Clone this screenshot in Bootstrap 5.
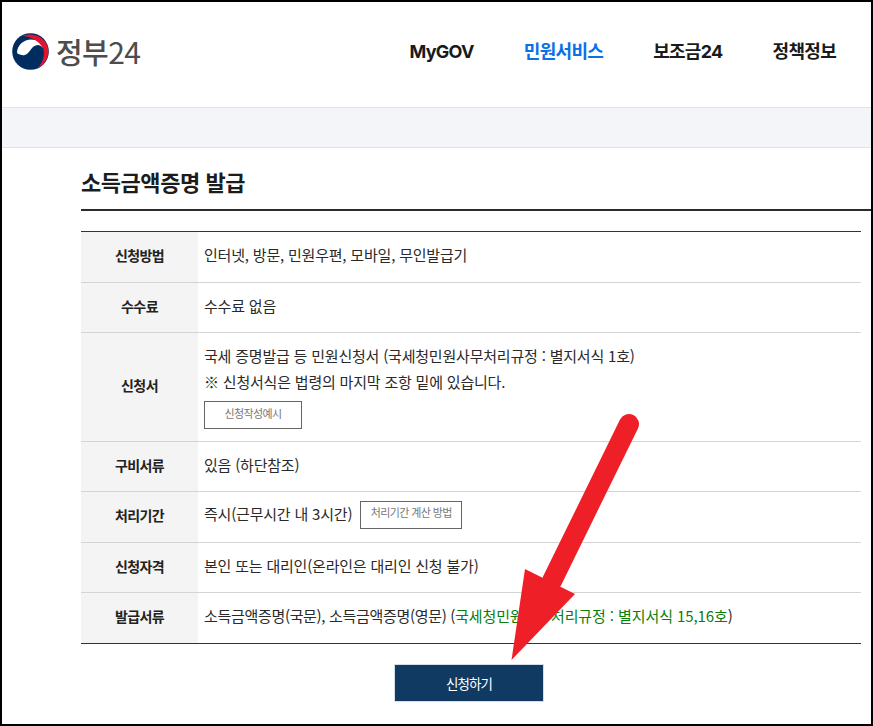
<!DOCTYPE html>
<html lang="ko">
<head>
<meta charset="utf-8">
<title>소득금액증명 발급</title>
<link rel="stylesheet" href="https://cdn.jsdelivr.net/npm/bootstrap@5.3.0/dist/css/bootstrap.min.css">
<style>
html,body{height:100%;overflow:hidden}
body{background:#fff;color:#222;font-family:"Noto Sans CJK KR","Noto Sans",sans-serif;letter-spacing:-.3px}
.frame{position:relative;height:726px;border:2px solid #000;overflow:hidden}
.top-head{height:105px;padding:0 35px 6px 10px}
.logo-box{gap:7px}
.brand-txt{font-size:29px;line-height:1;color:#4d4d4d;font-weight:500;letter-spacing:-.6px;margin-top:-2px}
.brand-num{font-weight:400;font-size:30px;letter-spacing:-.6px}
.main-nav{gap:50px}
.main-nav a{font-family:Inter,"Noto Sans CJK KR",sans-serif;font-size:18px;font-weight:700;color:#1a1a1a;text-decoration:none;letter-spacing:-.7px}
.main-nav a.on{color:#0b6fe8}
.band{height:41px;background:#f4f5f9;border-top:1px solid #e1e2e6;border-bottom:1px solid #e1e2e6}
.body-wrap{padding-left:79px}
.page-title{font-size:22px;font-weight:700;line-height:1;color:#1c1c1c;margin:0;padding:22px 0 13px;height:63px;border-bottom:2px solid #2b2b2b;letter-spacing:-.45px}
.info-wrap{margin-top:20px;width:780px}
.info-tb{width:780px;margin:0;border-top:1px solid #333;border-bottom:1px solid #333;font-size:15px;table-layout:fixed}
.info-tb th,.info-tb td{border-bottom:1px solid #d4d4d4;padding:0 0 4px;vertical-align:middle}
.info-tb tr:last-child th,.info-tb tr:last-child td{border-bottom:0}
.info-tb th{width:117px;background:#f4f4f4;text-align:center;font-size:14px;font-weight:700;color:#222;letter-spacing:-.6px;padding-bottom:3px}
.info-tb td{padding-left:6px;color:#2a2a2a;line-height:26px;letter-spacing:-.2px}
.info-tb td.form-cell{padding-top:10px;padding-bottom:12px}
.info-tb td.issue-cell{letter-spacing:-.32px}
.rh51{height:51px}
.rh50{height:50px}
.mini-btn{display:inline-block;border:1px solid #666;background:#fff;color:#777;font-size:11px;line-height:1;text-align:center;letter-spacing:-.6px}
.mini-a{width:98px;height:28px;padding-top:6px;margin-top:6px;display:block}
.mini-b{width:102px;height:28px;padding-top:5px;margin-left:4px;vertical-align:middle}
.grn{color:#0b7d0b;letter-spacing:-.1px}
.submit-row{padding-top:20px;padding-left:313px}
.go-btn{width:150px;height:38px;background:#113a63;border:1px solid #d5dde6;border-radius:0;color:#fff;font-size:13.5px;padding:0;letter-spacing:-.9px}
.go-btn:hover{background:#113a63;color:#fff}
.arrow{position:absolute;left:-2px;top:-2px;pointer-events:none}
</style>
</head>
<body>
<div class="frame">
  <header class="top-head d-flex align-items-center justify-content-between">
    <div class="logo-box d-flex align-items-center">
      <svg width="37" height="37" viewBox="0 0 37 37">
        <circle cx="18.5" cy="18.5" r="18.3" fill="#002c5f"/>
        <path d="M5 20C5 12 12 6.5 19 6.5C25 6.5 29 9.5 31 15C28.5 11.5 25 11 21.5 13.5C18 16.5 16.5 21.5 12 22.2C9.5 22.5 7 21.5 5 20Z" fill="#fff"/>
        <path d="M10 3C20 -1 32 3 35.5 13C38.5 22 34 31 25 36C30.5 30 33.5 22 31 15C27 8 19 3.5 10 3Z" fill="#e2142d"/>
      </svg>
      <span class="brand-txt">정부<span class="brand-num">24</span></span>
    </div>
    <nav class="main-nav d-flex">
      <a href="#">MyGOV</a>
      <a href="#" class="on">민원서비스</a>
      <a href="#">보조금24</a>
      <a href="#">정책정보</a>
    </nav>
  </header>
  <div class="band"></div>
  <main class="body-wrap">
    <h1 class="page-title">소득금액증명 발급</h1>
    <div class="info-wrap">
      <table class="info-tb">
        <tbody>
          <tr class="rh51"><th scope="row">신청방법</th><td>인터넷, 방문, 민원우편, 모바일, 무인발급기</td></tr>
          <tr class="rh50"><th scope="row">수수료</th><td>수수료 없음</td></tr>
          <tr><th scope="row">신청서</th><td class="form-cell">국세 증명발급 등 민원신청서 (국세청민원사무처리규정 : 별지서식 1호)<br>※ 신청서식은 법령의 마지막 조항 밑에 있습니다.<a href="#" class="mini-btn mini-a text-decoration-none">신청작성예시</a></td></tr>
          <tr class="rh50"><th scope="row">구비서류</th><td>있음 (하단참조)</td></tr>
          <tr class="rh51"><th scope="row">처리기간</th><td>즉시(근무시간 내 3시간) <a href="#" class="mini-btn mini-b text-decoration-none">처리기간 계산 방법</a></td></tr>
          <tr class="rh50"><th scope="row">신청자격</th><td>본인 또는 대리인(온라인은 대리인 신청 불가)</td></tr>
          <tr class="rh51"><th scope="row">발급서류</th><td class="issue-cell">소득금액증명(국문), 소득금액증명(영문) (<span class="grn">국세청민원사무처리규정 : 별지서식 15,16호</span>)</td></tr>
        </tbody>
      </table>
      <div class="submit-row"><button type="button" class="btn go-btn">신청하기</button></div>
    </div>
  </main>
  <svg class="arrow" width="873" height="726" viewBox="0 0 873 726">
    <path d="M629 424 L552 581" stroke="#ef1f27" stroke-width="20" stroke-linecap="round" fill="none"/>
    <path d="M511.5 660 L525 569 L575 594Z" fill="#ef1f27"/>
  </svg>
</div>
</body>
</html>
